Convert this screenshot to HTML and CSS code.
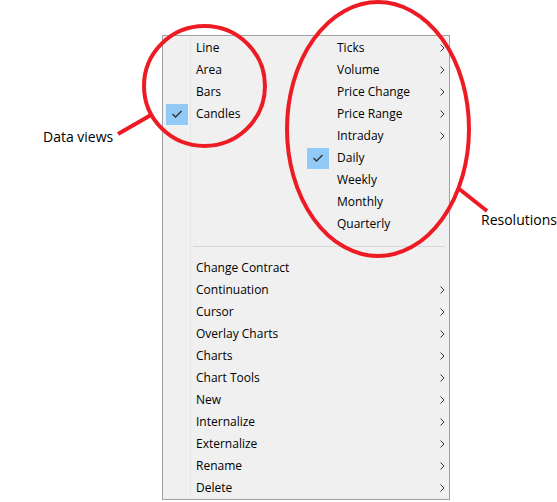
FILE: index.html
```html
<!DOCTYPE html>
<html lang="en">
<head>
    <meta charset="UTF-8">
    <meta name="viewport" content="width=device-width, initial-scale=1.0">
    <title>Chart context menu</title>
    <link rel="stylesheet" href="styles.css">
</head>
<body>

<div class="page">
    <div class="menu">
        <div class="views">
            <div class="col col-left">
                <div class="item"><span class="check"></span><span class="label">Line</span></div>
                <div class="item"><span class="check"></span><span class="label">Area</span></div>
                <div class="item"><span class="check"></span><span class="label">Bars</span></div>
                <div class="item"><span class="check on"><svg width="12" height="10" viewBox="0 0 12 10"><polyline points="1.5,5 4.5,8 10.5,2" /></svg></span><span class="label">Candles</span></div>
            </div>
            <div class="col col-right">
                <div class="item sub"><span class="check"></span><span class="label">Ticks</span><svg class="arrow" width="5" height="8" viewBox="0 0 5 8"><polyline points="0.5,0.5 4,4 0.5,7.5" /></svg></div>
                <div class="item sub"><span class="check"></span><span class="label">Volume</span><svg class="arrow" width="5" height="8" viewBox="0 0 5 8"><polyline points="0.5,0.5 4,4 0.5,7.5" /></svg></div>
                <div class="item sub"><span class="check"></span><span class="label">Price Change</span><svg class="arrow" width="5" height="8" viewBox="0 0 5 8"><polyline points="0.5,0.5 4,4 0.5,7.5" /></svg></div>
                <div class="item sub"><span class="check"></span><span class="label">Price Range</span><svg class="arrow" width="5" height="8" viewBox="0 0 5 8"><polyline points="0.5,0.5 4,4 0.5,7.5" /></svg></div>
                <div class="item sub"><span class="check"></span><span class="label">Intraday</span><svg class="arrow" width="5" height="8" viewBox="0 0 5 8"><polyline points="0.5,0.5 4,4 0.5,7.5" /></svg></div>
                <div class="item"><span class="check on"><svg width="12" height="10" viewBox="0 0 12 10"><polyline points="1.5,5 4.5,8 10.5,2" /></svg></span><span class="label">Daily</span></div>
                <div class="item"><span class="check"></span><span class="label">Weekly</span></div>
                <div class="item"><span class="check"></span><span class="label">Monthly</span></div>
                <div class="item"><span class="check"></span><span class="label">Quarterly</span></div>
            </div>
        </div>

        <div class="sep"><div class="sep-line"></div></div>

        <div class="list">
            <div class="item"><span class="check"></span><span class="label">Change Contract</span></div>
            <div class="item sub"><span class="check"></span><span class="label">Continuation</span><svg class="arrow" width="5" height="8" viewBox="0 0 5 8"><polyline points="0.5,0.5 4,4 0.5,7.5" /></svg></div>
            <div class="item sub"><span class="check"></span><span class="label">Cursor</span><svg class="arrow" width="5" height="8" viewBox="0 0 5 8"><polyline points="0.5,0.5 4,4 0.5,7.5" /></svg></div>
            <div class="item sub"><span class="check"></span><span class="label">Overlay Charts</span><svg class="arrow" width="5" height="8" viewBox="0 0 5 8"><polyline points="0.5,0.5 4,4 0.5,7.5" /></svg></div>
            <div class="item sub"><span class="check"></span><span class="label">Charts</span><svg class="arrow" width="5" height="8" viewBox="0 0 5 8"><polyline points="0.5,0.5 4,4 0.5,7.5" /></svg></div>
            <div class="item sub"><span class="check"></span><span class="label">Chart Tools</span><svg class="arrow" width="5" height="8" viewBox="0 0 5 8"><polyline points="0.5,0.5 4,4 0.5,7.5" /></svg></div>
            <div class="item sub"><span class="check"></span><span class="label">New</span><svg class="arrow" width="5" height="8" viewBox="0 0 5 8"><polyline points="0.5,0.5 4,4 0.5,7.5" /></svg></div>
            <div class="item sub"><span class="check"></span><span class="label">Internalize</span><svg class="arrow" width="5" height="8" viewBox="0 0 5 8"><polyline points="0.5,0.5 4,4 0.5,7.5" /></svg></div>
            <div class="item sub"><span class="check"></span><span class="label">Externalize</span><svg class="arrow" width="5" height="8" viewBox="0 0 5 8"><polyline points="0.5,0.5 4,4 0.5,7.5" /></svg></div>
            <div class="item sub"><span class="check"></span><span class="label">Rename</span><svg class="arrow" width="5" height="8" viewBox="0 0 5 8"><polyline points="0.5,0.5 4,4 0.5,7.5" /></svg></div>
            <div class="item sub"><span class="check"></span><span class="label">Delete</span><svg class="arrow" width="5" height="8" viewBox="0 0 5 8"><polyline points="0.5,0.5 4,4 0.5,7.5" /></svg></div>
        </div>
    </div>

    <!-- red annotation marks drawn over the menu -->
    <svg class="marks" width="557" height="502" viewBox="0 0 557 502">
        <ellipse cx="204.5" cy="86" rx="60.5" ry="60" />
        <ellipse cx="378" cy="129" rx="91" ry="127" />
        <line x1="118" y1="134" x2="151" y2="115" />
        <line x1="458" y1="188" x2="487" y2="211" />
    </svg>
    <span class="note note-views">Data views</span>
    <span class="note note-res">Resolutions</span>
</div>

</body>
</html>
```

FILE: styles.css
```css
body {
    margin: 0;
    background-color: #fff;
    font-family: "Open Sans", "Noto Sans", Arial, sans-serif;
    color: #000;
}
.page {
    position: relative;
    width: 557px;
    height: 502px;
    padding: 35px 0 0 162px;
    box-sizing: border-box;
    overflow: hidden;
}
.menu {
    width: 286px;
    padding-top: 1px;
    border: 1px solid #a0a0a0;
    background-color: #f0f0f0;
    background-image: linear-gradient(to right, transparent 27px, #e6e6e6 27px, #e6e6e6 28px, transparent 28px);
    font-size: 12px;
}
.views {
    display: flex;
}
.col-left {
    width: 141px;
}
.col-right {
    flex: 1;
    background-color: #f0f0f0;
}
.item {
    display: flex;
    align-items: center;
    height: 22px;
    line-height: 22px;
    white-space: nowrap;
}
.check {
    display: flex;
    align-items: center;
    justify-content: center;
    width: 22px;
    height: 21px;
    margin-left: 3px;
    margin-right: 8px;
    flex-shrink: 0;
}
.check.on {
    background-color: #91c9f7;
}
.check svg polyline {
    fill: none;
    stroke: #333;
    stroke-width: 1.4;
}
.arrow {
    margin-left: auto;
    margin-right: 4px;
}
.arrow polyline {
    fill: none;
    stroke: #333;
    stroke-width: 1;
}
.sep {
    height: 22px;
    display: flex;
    align-items: center;
    padding-left: 30px;
    padding-right: 4px;
}
.sep-line {
    flex: 1;
    height: 1px;
    background-color: #d7d7d7;
}
.marks {
    position: absolute;
    left: 0;
    top: 0;
    pointer-events: none;
}
.marks ellipse,
.marks line {
    fill: none;
    stroke: #ed1c24;
    stroke-width: 4;
}
.note {
    position: absolute;
    font-size: 14px;
    line-height: 18px;
    color: #000;
}
.note-views {
    left: 43px;
    top: 128px;
}
.note-res {
    left: 481px;
    top: 211px;
}
```
